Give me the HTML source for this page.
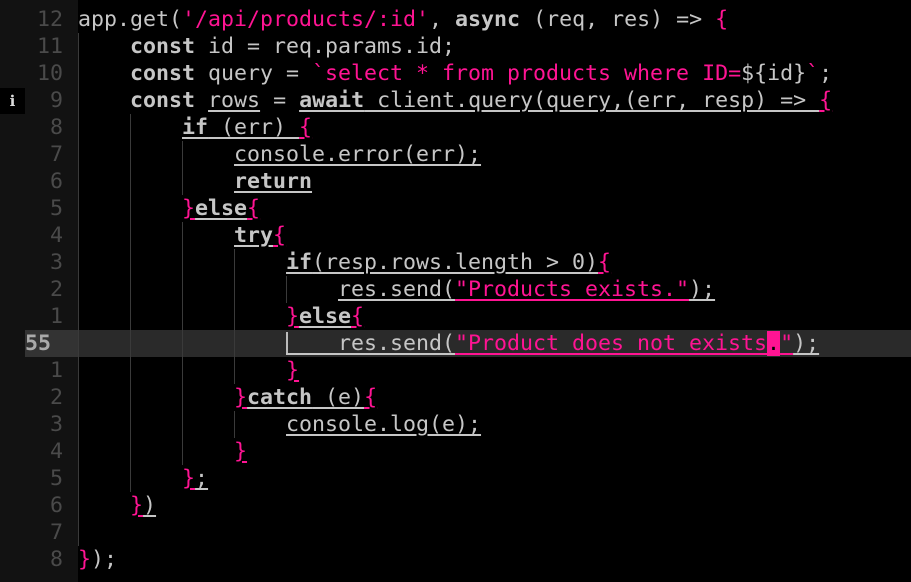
<!DOCTYPE html>
<html><head><meta charset="utf-8"><style>
html,body{margin:0;padding:0;background:#000;width:911px;height:582px;overflow:hidden}
#g{position:absolute;left:0;top:0;width:78px;height:582px;background:#121212}
#hl{position:absolute;left:25px;top:330px;width:886px;height:27px;background:#2a2a2a}
#hlg{position:absolute;left:25px;top:330px;width:53px;height:27px;background:#333}
.ln{position:absolute;left:0;width:63px;text-align:right;color:#4a4a4a;font:21.6px/27px "DejaVu Sans Mono",monospace}
.code{position:absolute;left:78px;white-space:pre;color:#c6c6c6;font:21.6px/27px "DejaVu Sans Mono",monospace}
.p{color:#ff1493}
b{font-weight:bold}
.u{text-decoration:underline;text-underline-offset:3px}
.v{position:absolute;width:1px;background:#3a3a3a}
#info{position:absolute;left:0;top:88px;width:25px;height:26px;background:#000;color:#ddd;font:bold 15px "DejaVu Sans",sans-serif;text-align:center;line-height:26px}
.cur{background:#ff1493;color:#000}
</style></head><body>
<div id="g"></div><div id="hl"></div><div id="hlg"></div>
<div id="info">ℹ</div>
<div class="v" style="left:78px;top:33px;height:513px"></div>
<div class="v" style="left:130px;top:114px;height:378px"></div>
<div class="v" style="left:182px;top:141px;height:54px"></div>
<div class="v" style="left:182px;top:222px;height:243px"></div>
<div class="v" style="left:234px;top:249px;height:135px"></div>
<div class="v" style="left:234px;top:411px;height:27px"></div>
<div class="v" style="left:286px;top:276px;height:27px"></div>
<div class="v" style="left:286px;top:332px;height:23px;background:#bbb;width:2px"></div>
<div class="ln" style="top:6px">12</div>
<div class="ln" style="top:33px">11</div>
<div class="ln" style="top:60px">10</div>
<div class="ln" style="top:87px">9</div>
<div class="ln" style="top:114px">8</div>
<div class="ln" style="top:141px">7</div>
<div class="ln" style="top:168px">6</div>
<div class="ln" style="top:195px">5</div>
<div class="ln" style="top:222px">4</div>
<div class="ln" style="top:249px">3</div>
<div class="ln" style="top:276px">2</div>
<div class="ln" style="top:303px">1</div>
<div class="ln" style="top:330px;left:25px;width:40px;text-align:left;color:#aaa;font-weight:bold">55</div>
<div class="ln" style="top:357px">1</div>
<div class="ln" style="top:384px">2</div>
<div class="ln" style="top:411px">3</div>
<div class="ln" style="top:438px">4</div>
<div class="ln" style="top:465px">5</div>
<div class="ln" style="top:492px">6</div>
<div class="ln" style="top:519px">7</div>
<div class="ln" style="top:546px">8</div>
<div class="code" style="top:6px">app.get(<span class="p">'/api/products/:id'</span>, <b>async</b> (req, res) =&gt; <span class="p">{</span>
    <b>const</b> id = req.params.id;
    <b>const</b> query = <span class="p">`select * from products where ID=</span>${id}<span class="p">`</span>;
    <b>const</b> <span class="u">rows</span> = <b class="u">await</b><span class="u"> client.query(query,(err, resp) =&gt; </span><span class="p u">{</span>
        <b class="u">if</b><span class="u"> (err) </span><span class="p u">{</span>
            <span class="u">console.error(err);</span>
            <b class="u">return</b>
        <span class="p u">}</span><b class="u">else</b><span class="p u">{</span>
            <b class="u">try</b><span class="p u">{</span>
                <b class="u">if</b><span class="u">(resp.rows.length &gt; 0)</span><span class="p u">{</span>
                    <span class="u">res.send(</span><span class="p u">"Products exists."</span><span class="u">);</span>
                <span class="p u">}</span><b class="u">else</b><span class="p u">{</span>
                <span class="u">    res.send(</span><span class="p u">"Product does not exists<span class="cur">.</span>"</span><span class="u">);</span>
                <span class="p u">}</span>
            <span class="p u">}</span><b class="u">catch</b><span class="u"> (e)</span><span class="p u">{</span>
                <span class="u">console.log(e);</span>
            <span class="p u">}</span>
        <span class="p u">}</span><span class="u">;</span>
    <span class="p u">}</span><span class="u">)</span>

<span class="p">}</span>);</div>
</body></html>
